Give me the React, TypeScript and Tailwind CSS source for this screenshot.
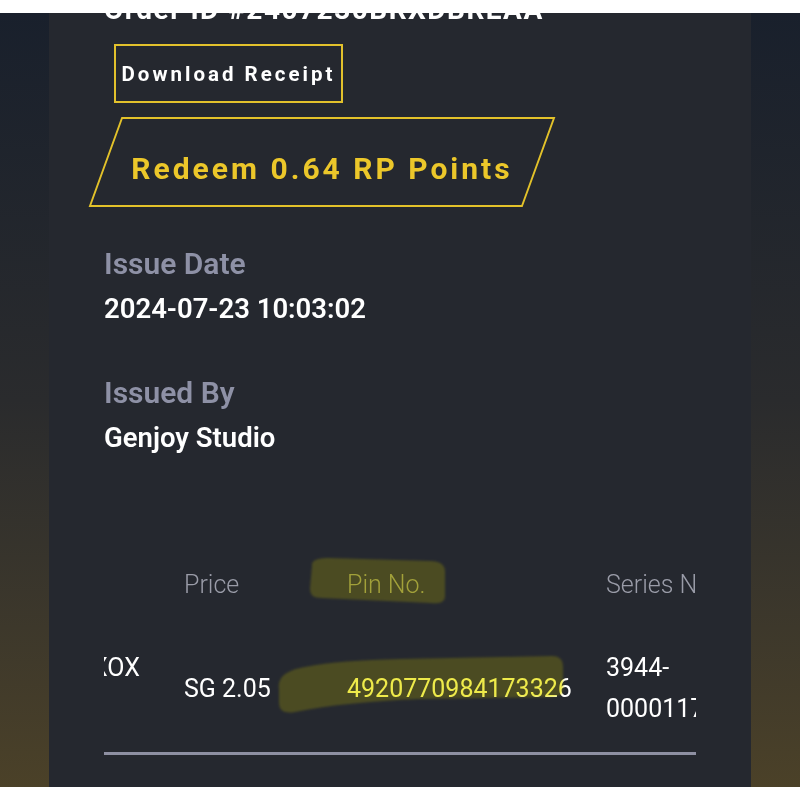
const font = { fontFamily: "Roboto, 'Noto Sans', sans-serif" };

// brush-stroke shapes of the highlighter marks, page coordinates
const MARKS = [
  "M312 566 C311 559 320 558 330 558 L430 561 C442 561 446 566 445 575 L445 596 C445 603 438 604 430 603 L322 598 C313 598 310 595 310 588 Z",
  "M279 690 C277 676 288 670 305 667 C330 662 360 660 400 659 L552 656 C560 656 563 660 563 667 L563 690 C563 696 556 697 548 697 L420 699 C370 701 330 705 295 712 C283 714 279 710 279 702 Z",
];

function Highlights({ color, blend }: { color: string; blend: string }) {
  return (
    <svg
      className={`pointer-events-none absolute left-[-49px] top-0 h-[774px] w-[800px] blur-[0.8px] ${blend}`}
      viewBox="0 13 800 774"
    >
      {MARKS.map((d, i) => (
        <path key={i} d={d} fill={color} />
      ))}
    </svg>
  );
}

export default function App() {
  return (
    <div className="flex h-[800px] w-[800px] flex-col overflow-hidden bg-white" style={font}>
      <div className="mt-[13px] flex h-[774px] justify-center overflow-hidden bg-gradient-to-b from-[#19202c] via-[#2a2b2d] to-[#4b4128]">
        <div className="relative w-[702px] bg-[#25282f] px-[55px]">
          {/* order id, mostly scrolled out of view */}
          <div className="-mt-[17px] whitespace-nowrap text-[28px] font-bold leading-[28px] tracking-[1.5px] text-white">
            Order ID #2407230BRXDBREAA
          </div>

          <button className="ml-[10px] mt-[20px] flex h-[59px] w-[229px] items-center justify-center border-2 border-[#e2c12c] pt-px text-[20.5px] font-bold tracking-[3px] text-white">
            Download Receipt
          </button>

          <div className="relative ml-px mt-[14px] h-[90px] w-[434px]">
            <div className="absolute inset-0 -skew-x-[20deg] border-2 border-[#e3c22a]" />
            <div className="relative flex h-full items-center justify-center pt-3 text-[30px] font-bold tracking-[3px] text-[#ecc72a]">
              Redeem 0.64 RP Points
            </div>
          </div>

          <div className="mt-[42px] text-[30px] font-semibold leading-[30px] text-[#8e91a6]">Issue Date</div>
          <div className="mt-[16px] text-[27.5px] font-semibold leading-[28px] text-white">2024-07-23 10:03:02</div>

          <div className="mt-[55px] text-[30px] font-semibold leading-[30px] text-[#8e91a6]">Issued By</div>
          <div className="mt-[16px] text-[27.5px] font-semibold leading-[28px] text-white">Genjoy Studio</div>

          {/* table, scrolled sideways */}
          <div className="mt-[112px] overflow-hidden">
            <div className="grid w-[702px] grid-cols-[80px_163px_259px_200px] text-[25px] leading-[41px]">
              <div />
              <div className="font-light text-[#9a9ca8]">Price</div>
              <div className="font-light text-[#9a9ca8]">Pin No.</div>
              <div className="whitespace-nowrap font-light text-[#9a9ca8]">Series No.</div>

              <div className="mt-[42px] -ml-[12px] self-start text-white">XOX</div>
              <div className="mt-[42px] self-center text-white">SG 2.05</div>
              <div className="mt-[42px] self-center text-white">4920770984173326</div>
              <div className="mt-[42px] text-white">
                <div>3944-</div>
                <div className="whitespace-nowrap">00001173</div>
              </div>
            </div>
          </div>

          <div className="mt-[23px] h-[3px] bg-[#8e90a2]" />

          <Highlights color="rgb(234,230,54)" blend="mix-blend-multiply" />
          <Highlights color="rgb(47,45,25)" blend="mix-blend-screen" />
        </div>
      </div>
    </div>
  );
}
